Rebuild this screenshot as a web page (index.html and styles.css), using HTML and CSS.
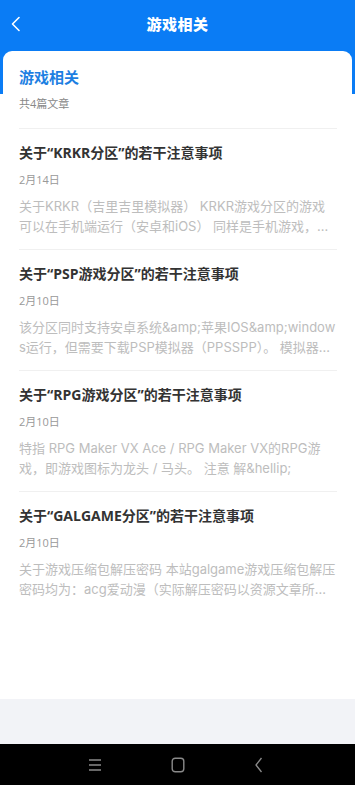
FILE: index.html
```html
<!DOCTYPE html>
<html lang="zh-CN">
<head>
<meta charset="utf-8">
<meta name="viewport" content="width=device-width, initial-scale=1">
<title>游戏相关</title>
<link rel="stylesheet" href="styles.css">
</head>
<body>
<div class="app">
  <header class="topbar">
    <button class="back" aria-label="返回">
      <svg width="12" height="16" viewBox="0 0 12 16"><path d="M9 1.5 L2.5 8 L9 14.5" fill="none" stroke="#fff" stroke-width="1.6" stroke-linecap="round" stroke-linejoin="round"/></svg>
    </button>
    <h1 class="topbar-title">游戏相关</h1>
    <span class="spacer"></span>
  </header>
  <main class="sheet">
    <section class="card">
      <div class="card-head">
        <h2 class="card-title">游戏相关</h2>
        <p class="card-count">共4篇文章</p>
      </div>
      <ul class="list">
        <li class="item">
          <h3 class="item-title">关于“KRKR分区”的若干注意事项</h3>
          <p class="item-date">2月14日</p>
          <p class="item-desc">关于KRKR（吉里吉里模拟器） KRKR游戏分区的游戏可以在手机端运行（安卓和iOS） 同样是手机游戏，…</p>
        </li>
        <li class="item">
          <h3 class="item-title">关于“PSP游戏分区”的若干注意事项</h3>
          <p class="item-date">2月10日</p>
          <p class="item-desc">该分区同时支持安卓系统&amp;amp;苹果IOS&amp;amp;windows运行，但需要下载PSP模拟器（PPSSPP）。 模拟器…</p>
        </li>
        <li class="item">
          <h3 class="item-title">关于“RPG游戏分区”的若干注意事项</h3>
          <p class="item-date">2月10日</p>
          <p class="item-desc">特指 RPG Maker VX Ace / RPG Maker VX的RPG游戏，即游戏图标为龙头 / 马头。 注意 解&amp;hellip;</p>
        </li>
        <li class="item">
          <h3 class="item-title">关于“GALGAME分区”的若干注意事项</h3>
          <p class="item-date">2月10日</p>
          <p class="item-desc">关于游戏压缩包解压密码 本站galgame游戏压缩包解压密码均为：acg爱动漫（实际解压密码以资源文章所…</p>
        </li>
      </ul>
    </section>
  </main>
  <div class="gap"></div>
  <nav class="sysnav">
    <svg width="14" height="14" viewBox="0 0 14 14"><path d="M1 2h12M1 7h12M1 12h12" stroke="#8a8a8a" stroke-width="1.3"/></svg>
    <svg width="14" height="16" viewBox="0 0 14 16"><rect x="1.2" y="1.2" width="11.6" height="13.6" rx="3" fill="none" stroke="#8a8a8a" stroke-width="1.4"/></svg>
    <svg width="10" height="16" viewBox="0 0 10 16"><path d="M7.5 1 L2 8 L7.5 15" fill="none" stroke="#8a8a8a" stroke-width="1.3" stroke-linejoin="round"/></svg>
  </nav>
</div>
</body>
</html>
```

FILE: styles.css
```css
* { box-sizing: border-box; margin: 0; padding: 0; }
html, body { background: #000; }
body {
  width: 355px;
  height: 785px;
  font-family: "Open Sans", "Noto Sans CJK SC", sans-serif;
  overflow: hidden;
}
.app {
  display: flex;
  flex-direction: column;
  height: 785px;
  background: #f2f3f7;
}
.topbar {
  height: 51px;
  background: #0a7cf5;
  display: flex;
  align-items: center;
  padding: 0 6px 3px 6px;
}
.back {
  width: 20px;
  height: 24px;
  border: 0;
  background: none;
  display: flex;
  align-items: center;
  justify-content: center;
}
.spacer { width: 20px; }
.topbar-title {
  flex: 1;
  text-align: center;
  color: #fff;
  font-family: "Noto Sans CJK SC", sans-serif;
  font-size: 15px;
  font-weight: 900;
  letter-spacing: 0.5px;
  line-height: 20px;
}
.sheet {
  height: 648px;
  background: linear-gradient(to bottom, #0a7cf5 0, #0a7cf5 43px, #fff 43px, #fff 100%);
  display: flex;
  flex-direction: column;
}
.card {
  flex: 1;
  margin: 0 3px;
  background: #fff;
  border-radius: 9px 9px 0 0;
  padding: 0 15px 0 16px;
}
.card-head {
  padding-top: 16px;
}
.card-title {
  color: #1d7fe2;
  font-family: "Noto Sans CJK SC", sans-serif;
  font-size: 15px;
  font-weight: 700;
  line-height: 20px;
}
.card-count {
  margin-top: 9px;
  color: #888;
  font-size: 11px;
  line-height: 16px;
  padding-bottom: 16px;
}
.list { list-style: none; }
.item {
  border-top: 1px solid #f0f0f0;
  padding: 14px 0 13px;
}
.item-title {
  color: #333;
  font-size: 14px;
  font-weight: 700;
  line-height: 20px;
}
.item-date {
  margin-top: 9px;
  color: #999;
  font-size: 11px;
  line-height: 16px;
}
.item-desc {
  margin-top: 8px;
  color: #bdbdbd;
  font-family: Inter, "Noto Sans CJK SC", sans-serif;
  font-size: 13px;
  line-height: 20px;
  height: 40px;
  overflow: hidden;
  word-break: break-all;
}
.gap { height: 45px; }
.sysnav {
  flex: 1;
  background: #000;
  display: flex;
  align-items: center;
  justify-content: space-between;
  padding: 0 91px 0 88px;
}
```
